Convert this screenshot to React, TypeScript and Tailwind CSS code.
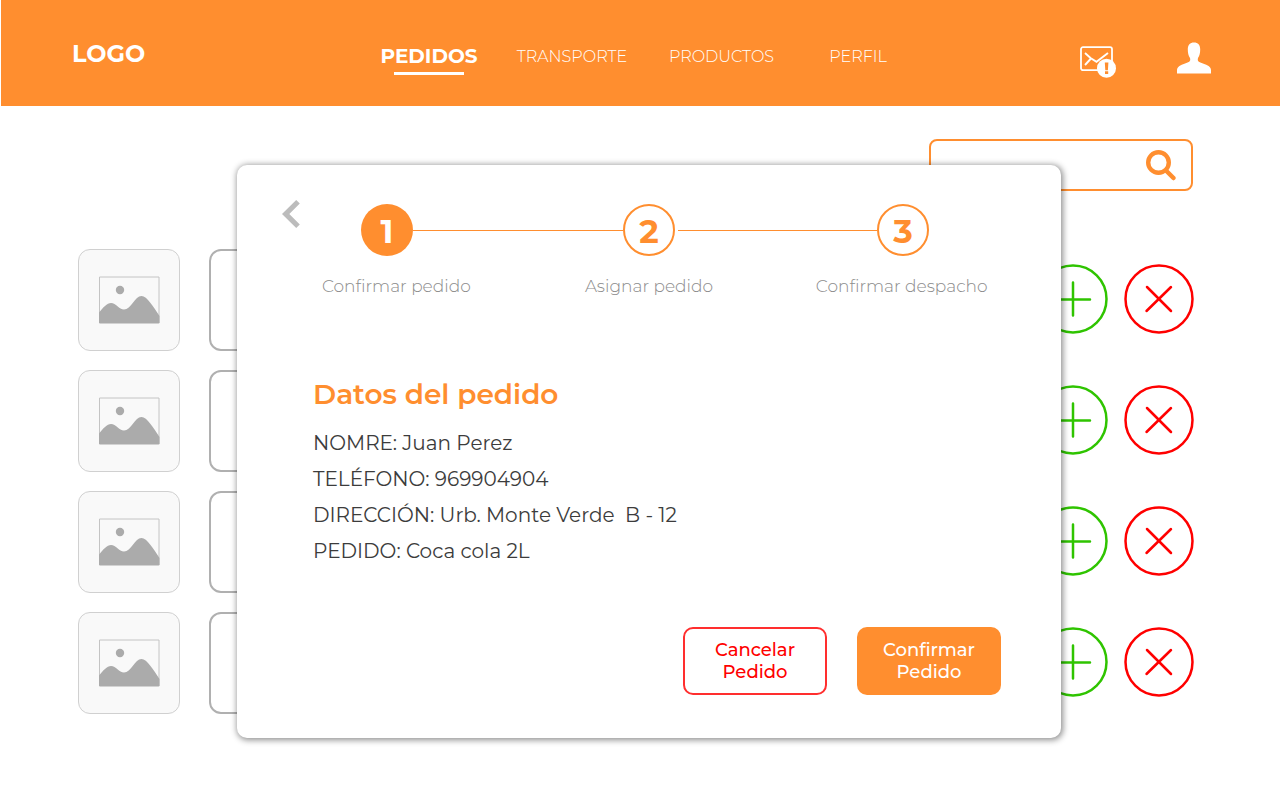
import React from 'react';

const navItems = ['TRANSPORTE', 'PRODUCTOS', 'PERFIL'];
const steps = ['Confirmar pedido', 'Asignar pedido', 'Confirmar despacho'];
const details = [
  'NOMRE: Juan Perez',
  'TELÉFONO: 969904904',
  'DIRECCIÓN: Urb. Monte Verde\u00a0 B - 12',
  'PEDIDO: Coca cola 2L',
];

function MailIcon() {
  return (
    <svg width="36" height="32" viewBox="0 0 36 32" fill="none" aria-hidden="true">
      <rect x="1" y="1.200" width="31" height="23" rx="2" stroke="white" strokeWidth="1.800" />
      <path d="M5 7 10.500 12 16.500 15.800 28 7M5 19 11 12.500" stroke="white" strokeWidth="1.900" />
      <circle cx="26.500" cy="22.300" r="9.500" fill="white" />
      <path d="M24.800 16.500h3.600l-.5 7.700h-2.600zM25 25.300h3.200v2.700h-3.200z" fill="#ff8e2f" />
    </svg>
  );
}

function UserIcon() {
  return (
    <svg width="34" height="32" viewBox="0 0 34 32" fill="white" aria-hidden="true">
      <path d="M17 .5c4 0 6.200 2.500 6.200 7 0 3.500-.7 6.500-2.200 8.500-.5 1.600-.2 3 .8 3.800 2.500 1.500 7 2.400 9.800 4.200 1.700 1.200 2.400 2.500 2.400 4.200V31.500H0v-3.300c0-1.700.7-3 2.400-4.200 2.800-1.800 7.300-2.700 9.800-4.200 1-.8 1.300-2.200.8-3.800-1.500-2-2.200-5-2.200-8.500 0-4.500 2.200-7 6.200-7z" />
    </svg>
  );
}

function ImageIcon() {
  return (
    <svg width="61" height="48" viewBox="0 0 61 48" fill="none" aria-hidden="true">
      <path d="M.5 47V1h59.500v46" stroke="#c4c4c4" />
      <circle cx="21" cy="14" r="4.200" fill="#ababab" />
      <path d="M0 36.500C4 31.500 8 27 12 27c5 0 8 6.500 13 6.500C32 33.500 36 20 42.500 20 48 20 54.500 31 60.500 40v6.500a1 1 0 0 1-1 1H1a1 1 0 0 1-1-1z" fill="#ababab" />
    </svg>
  );
}

function OrderRow() {
  return (
    <li className="flex items-start">
      <div className="flex h-[102px] w-[102px] items-center justify-center rounded-xl border border-[#d0d0d0] bg-[#f9f9f9]">
        <ImageIcon />
      </div>
      <div className="mx-[29px] h-[102px] flex-1 rounded-xl border-2 border-[#b0b0b0]" />
      <div className="flex gap-4 pt-[15px]">
        <button type="button" aria-label="Agregar">
          <svg width="70" height="70" viewBox="0 0 70 70" fill="none" stroke="#2fc400" strokeWidth="2.500" strokeLinecap="round" aria-hidden="true">
            <circle cx="35" cy="35" r="33.500" />
            <path d="M35 18.500v33M18 35.500h34" />
          </svg>
        </button>
        <button type="button" aria-label="Eliminar">
          <svg width="70" height="70" viewBox="0 0 70 70" fill="none" stroke="#ff0000" strokeWidth="2.500" strokeLinecap="round" aria-hidden="true">
            <circle cx="35" cy="35" r="33.500" />
            <path d="M23 23l24 24M47 23L22.500 47" />
          </svg>
        </button>
      </div>
    </li>
  );
}

export default function App() {
  return (
    <div className="relative min-h-screen bg-white font-[Montserrat,Inter,sans-serif]">
      <header className="ml-px flex h-[106px] items-center bg-[#ff8e2f] pr-[69px] pl-[71px] text-white">
        <a href="#inicio" className="w-[292px] pt-0.5 text-2xl leading-8 font-bold">LOGO</a>
        <nav className="grid grid-cols-[130px_156px_143px_130px] justify-items-center pt-2.5">
          <a href="#pedidos" aria-current="page" className="flex flex-col items-center gap-0.5">
            <span className="text-xl leading-7 font-bold">PEDIDOS</span>
            <span className="h-[3px] w-[70px] bg-white" />
          </a>
          {navItems.map((item) => (
            <a key={item} href={'#' + item.toLowerCase()} className="text-base leading-[30px] font-light">
              {item}
            </a>
          ))}
        </nav>
        <div className="ml-auto flex items-center gap-[61px]">
          <button type="button" aria-label="Mensajes" className="pt-[17px]"><MailIcon /></button>
          <button type="button" aria-label="Cuenta" className="pt-2.5"><UserIcon /></button>
        </div>
      </header>

      <main className="pt-[33px] pr-[86px] pb-10 pl-[78px]">
        <form className="mr-px ml-auto flex h-[52px] w-[264px] items-center rounded-lg border-2 border-[#ff8e2f] pr-[13px]">
          <input type="search" aria-label="Buscar" className="h-full min-w-0 flex-1 px-3 outline-none" />
          <button type="button" aria-label="Buscar pedidos">
            <svg width="34" height="34" viewBox="0 0 34 34" fill="none" stroke="#ff8e2f" aria-hidden="true">
              <circle cx="14.500" cy="14.500" r="10.300" strokeWidth="4.400" />
              <path d="M22 22.500 29.500 30" strokeWidth="4.500" strokeLinecap="round" />
            </svg>
          </button>
        </form>
        <ul className="mt-[58px] flex flex-col gap-[19px]">
          <OrderRow />
          <OrderRow />
          <OrderRow />
          <OrderRow />
        </ul>
      </main>

      <div className="absolute inset-x-0 top-[165px] flex justify-center pl-[18px]">
        <section
          role="dialog"
          aria-labelledby="order-title"
          className="w-full max-w-[824px] rounded-[10px] bg-white pt-[39px] pb-[43px] shadow-[1px_1px_6px_1px_rgba(0,0,0,0.45)]"
        >
          <div className="flex items-start pr-[132px] pl-[45px]">
            <button type="button" aria-label="Volver" className="-mt-1">
              <svg width="18" height="28" viewBox="0 0 18 28" fill="#bcbcbc" aria-hidden="true">
                <path d="M14.200 0 17.800 3.500 7.300 14l10.500 10.500-3.600 3.500L0 14z" />
              </svg>
            </button>
            <div className="ml-[61px] flex flex-1 items-center text-[33px] leading-none font-bold text-[#ff8e2f]">
              <span className="flex size-[52px] items-center justify-center rounded-full bg-[#ff8e2f] pt-0.5 text-white">1</span>
              <span className="h-px flex-[210] bg-[#ff8e2f]" />
              <span className="flex size-[52px] items-center justify-center rounded-full border-2 border-[#ff8e2f] pt-0.5">2</span>
              <span className="ml-[3px] h-px flex-[199] bg-[#ff8e2f]" />
              <span className="flex size-[52px] items-center justify-center rounded-full border-2 border-[#ff8e2f] pt-0.5">3</span>
            </div>
          </div>
          <ol className="mt-[18px] grid grid-cols-3 px-[33px] text-center text-[17px] leading-6 font-light text-[#8c8c8c]">
            {steps.map((step) => (
              <li key={step}>{step}</li>
            ))}
          </ol>

          <div className="mt-[78px] pr-[60px] pl-[76px]">
            <h1 id="order-title" className="text-[28px] leading-9 font-semibold text-[#ff8e2f]">Datos del pedido</h1>
            <div className="mt-[13px] text-xl leading-9 text-[#3c3c3c]">
              {details.map((line) => (
                <p key={line}>{line}</p>
              ))}
            </div>
            <div className="mt-[58px] flex justify-end gap-[30px] text-lg leading-[22px] font-medium">
              <button type="button" className="h-[68px] w-36 rounded-[10px] border-2 border-[#ff2e2e] text-[#ff0000]">
                Cancelar
                <br />
                Pedido
              </button>
              <button type="button" className="h-[68px] w-36 rounded-[10px] bg-[#ff8e2f] text-white">
                Confirmar
                <br />
                Pedido
              </button>
            </div>
          </div>
        </section>
      </div>
    </div>
  );
}
